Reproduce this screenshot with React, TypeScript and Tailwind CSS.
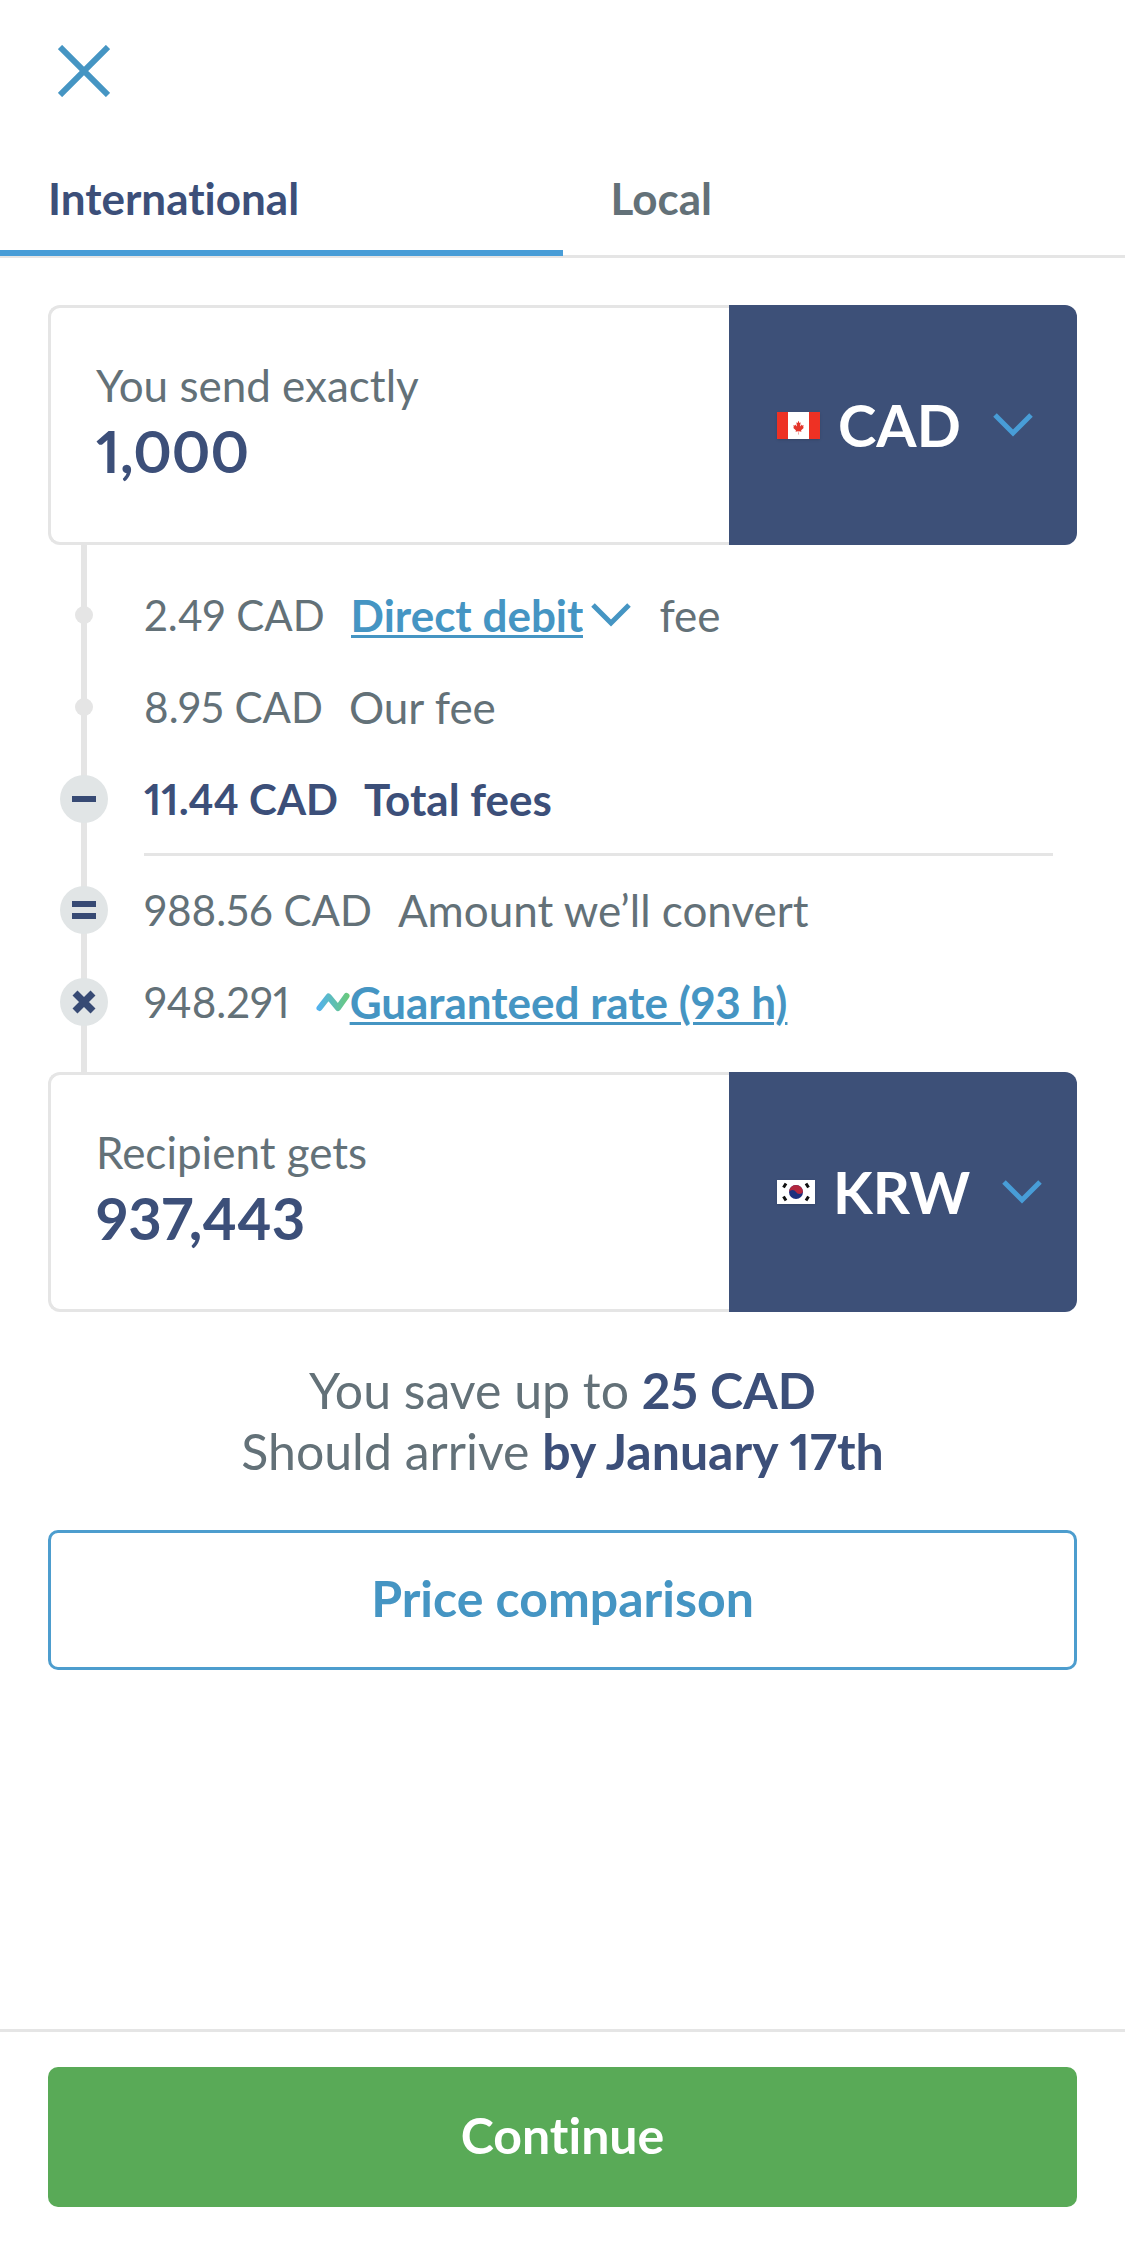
import React, { useState } from "react";

type Currency = "CAD" | "KRW";

const CanadaFlag = () => (
  <svg aria-hidden="true" className="shrink-0 shadow-sm" height="27" viewBox="0 0 43 27" width="43">
    <rect fill="#ee3124" height="27" width="43" />
    <rect fill="#fff" height="27" width="21" x="11" />
    <path
      d="m-90 2030 45-863a95 95 0 0 0-111-98l-859 151 116-320a65 65 0 0 0-20-73l-941-762 212-99a65 65 0 0 0 34-79l-186-572 542 115a65 65 0 0 0 73-38l105-247 423 454a65 65 0 0 0 111-57l-204-1052 327 189a65 65 0 0 0 91-27l332-652 332 652a65 65 0 0 0 91 27l327-189-204 1052a65 65 0 0 0 111 57l423-454 105 247a65 65 0 0 0 73 38l542-115-186 572a65 65 0 0 0 34 79l212 99-941 762a65 65 0 0 0-20 73l116 320-859-151a95 95 0 0 0-111 98l45 863z"
      fill="#e3352b"
      transform="translate(21.5 15.5) scale(0.0029 0.0034)"
    />
  </svg>
);

const KoreaFlag = () => (
  <svg aria-hidden="true" className="shrink-0 shadow-sm" height="24" viewBox="0 0 38 24" width="38">
    <rect fill="#fff" height="24" width="38" />
    <circle cx="19" cy="12" fill="#1b2f7e" r="7" />
    <path d="M12 12a7 7 0 0 1 14 0a4 4 0 0 1-7 0a4 4 0 0 0-7 0z" fill="#b3263e" />
    <g stroke="#111" strokeWidth="3">
      <path d="M6.5 7.5l2.5-4M29 3.5l2.500 4M6.500 16.500l2.500 4M29 20.500l2.500-4" />
    </g>
  </svg>
);

const flags: Record<Currency, React.ReactNode> = {
  CAD: <CanadaFlag />,
  KRW: <KoreaFlag />,
};

const Chevron = ({ className }: { className?: string }) => (
  <svg
    aria-hidden="true"
    className={className}
    fill="none"
    height="24"
    stroke="currentColor"
    strokeWidth="5"
    viewBox="0 0 40 24"
    width="40"
  >
    <path d="M2 2l18 18L38 2" />
  </svg>
);

const RateIcon = () => (
  <svg aria-hidden="true" fill="none" height="20" viewBox="0 0 34 20" width="34">
    <defs>
      <linearGradient gradientUnits="userSpaceOnUse" id="rate" x1="0" x2="34" y1="0" y2="0">
        <stop offset="0" stopColor="#51b0f5" />
        <stop offset="1" stopColor="#6bcb77" />
      </linearGradient>
    </defs>
    <path
      d="M3.500 16L12.500 4.500l9.500 11.500L30.500 4"
      stroke="url(#rate)"
      strokeLinecap="round"
      strokeLinejoin="round"
      strokeWidth="6"
    />
  </svg>
);

interface MoneyFieldProps {
  id: string;
  label: string;
  defaultValue: string;
  defaultCurrency: Currency;
}

const MoneyField = ({ id, label, defaultValue, defaultCurrency }: MoneyFieldProps) => {
  const [currency, setCurrency] = useState<Currency>(defaultCurrency);

  return (
    <div className="flex h-60">
      <div className="flex min-w-0 flex-1 flex-col justify-center rounded-l-xl border-3 border-r-0 border-[#e5e5e5] pb-2 pl-[45px]">
        <label className="text-[44px] leading-[60px] text-[#637178]" htmlFor={id}>
          {label}
        </label>
        <input
          className="w-full text-[58px] leading-[72px] font-bold text-[#3c4f79] outline-none"
          defaultValue={defaultValue}
          id={id}
          inputMode="decimal"
          type="text"
        />
      </div>
      <div className="flex w-[348px] items-center gap-[18px] rounded-r-xl bg-[#3d5078] pl-12">
        {flags[currency]}
        <div className="flex items-center gap-8">
          <select
            aria-label={`${label} currency`}
            className="field-sizing-content appearance-none text-[58px] leading-[72px] font-bold text-white outline-none"
            value={currency}
            onChange={(e) => setCurrency(e.target.value as Currency)}
          >
            <option value="CAD">CAD</option>
            <option value="KRW">KRW</option>
          </select>
          <Chevron className="text-[#489dd7]" />
        </div>
      </div>
    </div>
  );
};

interface StepProps {
  amount: string;
  children: React.ReactNode;
  marker?: React.ReactNode;
  bold?: boolean;
}

const Step = ({ amount, children, marker, bold }: StepProps) => (
  <li
    className={`flex h-23 items-center text-[44px] ${bold ? "font-bold text-[#3c4f79]" : "text-[#637178]"}`}
  >
    <span className="mr-9 flex w-12 justify-center">
      {marker ? (
        <span className="flex size-12 items-center justify-center rounded-full bg-[#e1e5e6]">
          {marker}
        </span>
      ) : (
        <span className="size-[18px] rounded-full bg-[#e5e5e5]" />
      )}
    </span>
    <span className="mr-[26px] text-[42px]">{amount}</span>
    {children}
  </li>
);

const Sign = ({ d, width = 6 }: { d: string; width?: number }) => (
  <svg aria-hidden="true" fill="none" height="24" stroke="#374a74" strokeWidth={width} width="24">
    <path d={d} />
  </svg>
);

const tabs = ["International", "Local"];

const App = () => {
  const [activeTab, setActiveTab] = useState("International");

  return (
    <div className="flex min-h-screen flex-col bg-white font-[Lato,'Open_Sans',sans-serif] proportional-nums [font-variant-ligatures:none]">
      <header className="flex h-[142px] items-center px-12">
        <button aria-label="Close" className="px-2.5 text-[#4595c3]" type="button">
          <svg fill="none" height="52" stroke="currentColor" strokeWidth="6" width="52">
            <path d="M2 2l48 48M50 2L2 50" />
          </svg>
        </button>
      </header>

      <div className="grid grid-cols-2 border-b-3 border-[#e5e5e5]" role="tablist">
        {tabs.map((tab) => (
          <button
            key={tab}
            aria-selected={tab === activeTab}
            className={`-mb-px h-[114px] border-b-6 px-12 pt-1 text-left text-[44px] font-bold ${
              tab === activeTab
                ? "border-[#489dd7] text-[#3c4f79]"
                : "border-transparent text-[#637178]"
            }`}
            role="tab"
            type="button"
            onClick={() => setActiveTab(tab)}
          >
            {tab}
          </button>
        ))}
      </div>

      <main className="flex-1 px-12 pt-[47px] pb-12">
        <MoneyField defaultCurrency="CAD" defaultValue="1,000" id="send" label="You send exactly" />

        <div className="relative px-3 py-6">
          <span className="absolute inset-y-0 left-[33px] w-1.5 bg-[#e5e5e5]" />
          <ul className="relative">
            <Step amount="2.49 CAD">
              <select
                aria-label="Payment method"
                className="field-sizing-content appearance-none font-bold text-[#4595c3] underline decoration-3 underline-offset-3 outline-none"
                defaultValue="Direct debit"
              >
                <option>Direct debit</option>
                <option>Wire transfer</option>
              </select>
              <Chevron className="mr-7 ml-2 text-[#4595c3]" />
              <span>fee</span>
            </Step>
            <Step amount="8.95 CAD">
              <span>Our fee</span>
            </Step>
            <Step bold amount="11.44 CAD" marker={<Sign d="M0 12h24" />}>
              <span>Total fees</span>
            </Step>
            <li className="my-2 mr-3 ml-21 h-[3px] bg-[#e5e5e5]" role="separator" />
            <Step amount="988.56 CAD" marker={<Sign d="M0 6h24M0 18h24" />}>
              <span>Amount we’ll convert</span>
            </Step>
            <Step amount="948.291" marker={<Sign d="M3 3l18 18M21 3L3 21" width={7} />}>
              <RateIcon />
              <a
                className="font-bold text-[#4595c3] underline decoration-3 underline-offset-3"
                href="#rate"
              >
                Guaranteed rate (93 h)
              </a>
            </Step>
          </ul>
        </div>

        <MoneyField
          defaultCurrency="KRW"
          defaultValue="937,443"
          id="receive"
          label="Recipient gets"
        />

        <p className="mt-12 text-center text-[50px] leading-[61px] text-[#637178]">
          You save up to <strong className="text-[#3c4f79]">25 CAD</strong>
          <br />
          Should arrive <strong className="text-[#3c4f79]">by January 17th</strong>
        </p>

        <button
          className="mt-12 h-[140px] w-full rounded-[10px] border-3 border-[#4d9dce] pb-1 text-[50px] font-bold text-[#4595c3]"
          type="button"
        >
          Price comparison
        </button>
      </main>

      <footer className="border-t-3 border-[#e5e5e5] px-12 pt-[35px] pb-14">
        <button
          className="h-[140px] w-full rounded-[10px] bg-[#59aa57] pb-1 text-[50px] font-bold text-white"
          type="button"
        >
          Continue
        </button>
      </footer>
    </div>
  );
};

export default App;
